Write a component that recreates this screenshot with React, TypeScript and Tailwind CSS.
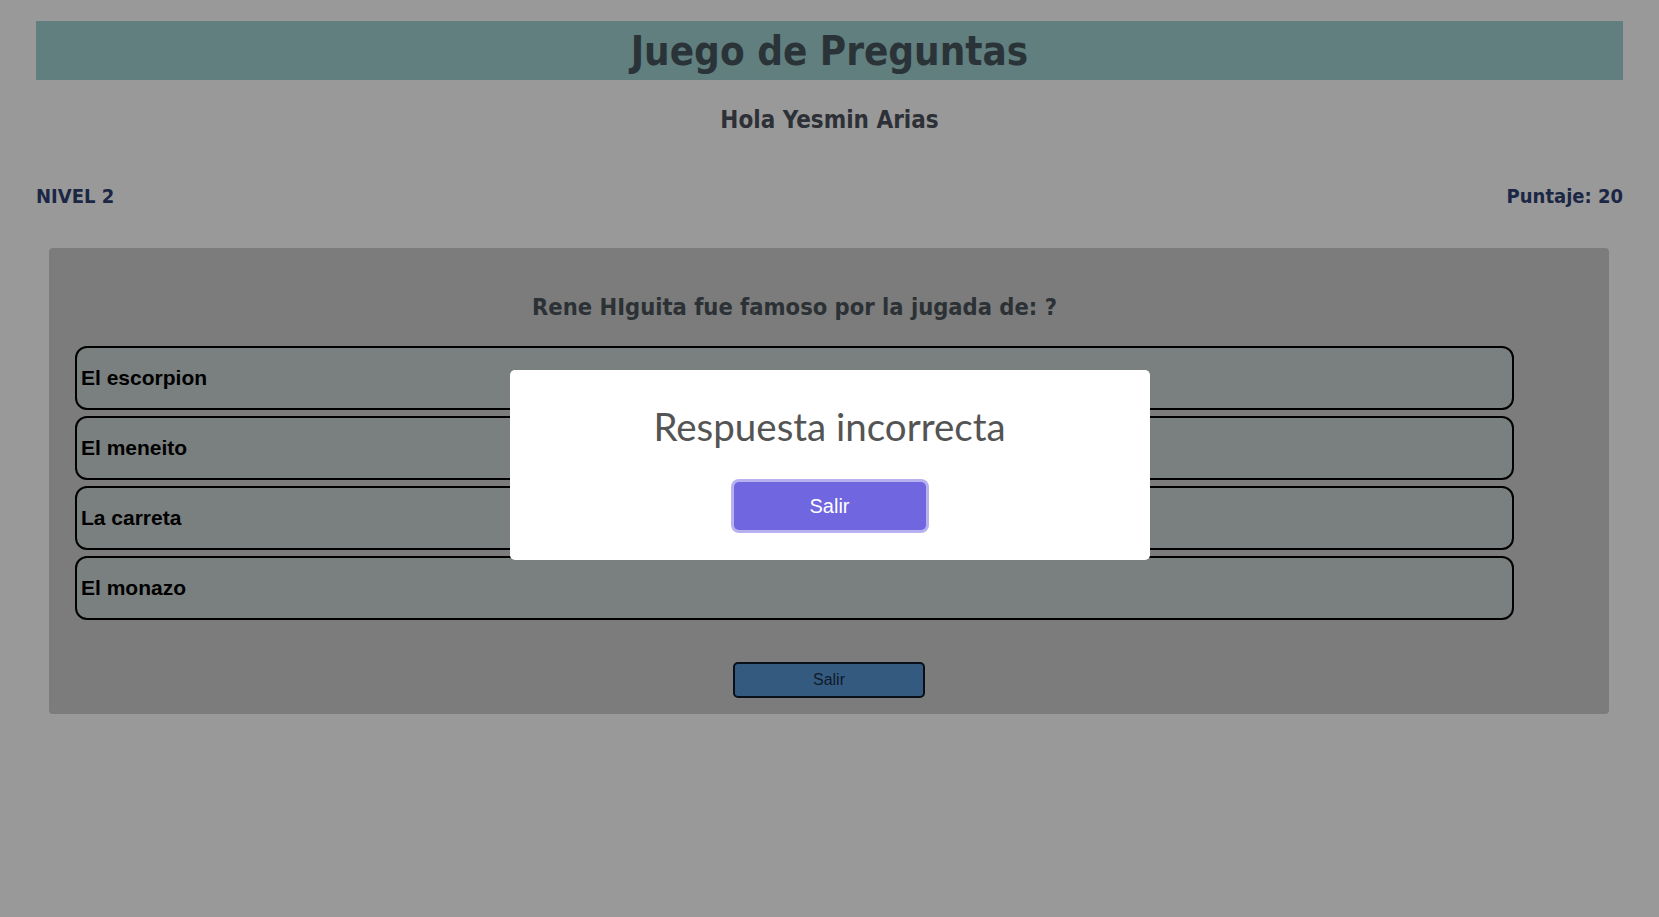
import React from "react";

const dj = "font-['DejaVu_Sans_Condensed','DejaVu_Sans',sans-serif] font-stretch-condensed font-bold";

export default function App() {
  const options = ["El escorpion", "El meneito", "La carreta", "El monazo"];
  return (
    <div className="relative min-h-screen w-full bg-[#999999] pt-[21px]">
      <header className="mx-[36px] flex h-[59px] items-center justify-center bg-[#617f7e]">
        <h1 className={`${dj} text-[40px] leading-none text-[#2a3338]`}>Juego de Preguntas</h1>
      </header>
      <p className={`${dj} mt-[26px] text-center text-[24px] leading-[28px] text-[#2d3036]`}>Hola Yesmin Arias</p>
      <div className={`${dj} mx-[36px] mt-[50px] flex justify-between text-[20px] leading-[24px] text-[#1b2744]`}>
        <span>NIVEL 2</span>
        <span>Puntaje: 20</span>
      </div>
      <section className="ml-[49px] mt-[40px] w-[1560px] rounded-[4px] bg-[#7b7c7b] pb-[16px] pt-[45px]">
        <p className={`${dj} ml-[26px] w-[1439px] text-center text-[23.5px] leading-[28px] text-[#2b3135]`}>
          Rene HIguita fue famoso por la jugada de: ?
        </p>
        <div className="ml-[26px] mt-[25px] flex w-[1439px] flex-col gap-[6px]">
          {options.map((o) => (
            <div
              key={o}
              className="flex h-[64px] items-center rounded-[12px] border-2 border-black bg-[#7a7f7f] pl-[4px] font-['Liberation_Sans',Arial,sans-serif] text-[21px] font-bold text-black"
            >
              {o}
            </div>
          ))}
        </div>
        <div className="mt-[42px] flex justify-center">
          <button className="h-[36px] w-[192px] rounded-[5px] border-2 border-[#0a0f1a] bg-[#345a80] font-['Liberation_Sans',Arial,sans-serif] text-[16px] text-[#0f1a2a]">
            Salir
          </button>
        </div>
      </section>
      <div className="absolute inset-x-0 top-[370px] flex justify-center">
        <div className="flex h-[190px] w-[640px] flex-col items-center rounded-[5px] bg-white pt-[33px]">
          <h2 className="font-['Lato','Open_Sans',sans-serif] text-[38.5px] leading-[46px] text-[#545454]">Respuesta incorrecta</h2>
          <button className="mt-[33px] h-[48px] w-[192px] rounded-[5px] bg-[#7066e0] font-['Liberation_Sans',Arial,sans-serif] text-[20px] text-white shadow-[0_0_0_3px_rgba(112,102,224,0.5)]">
            Salir
          </button>
        </div>
      </div>
    </div>
  );
}
